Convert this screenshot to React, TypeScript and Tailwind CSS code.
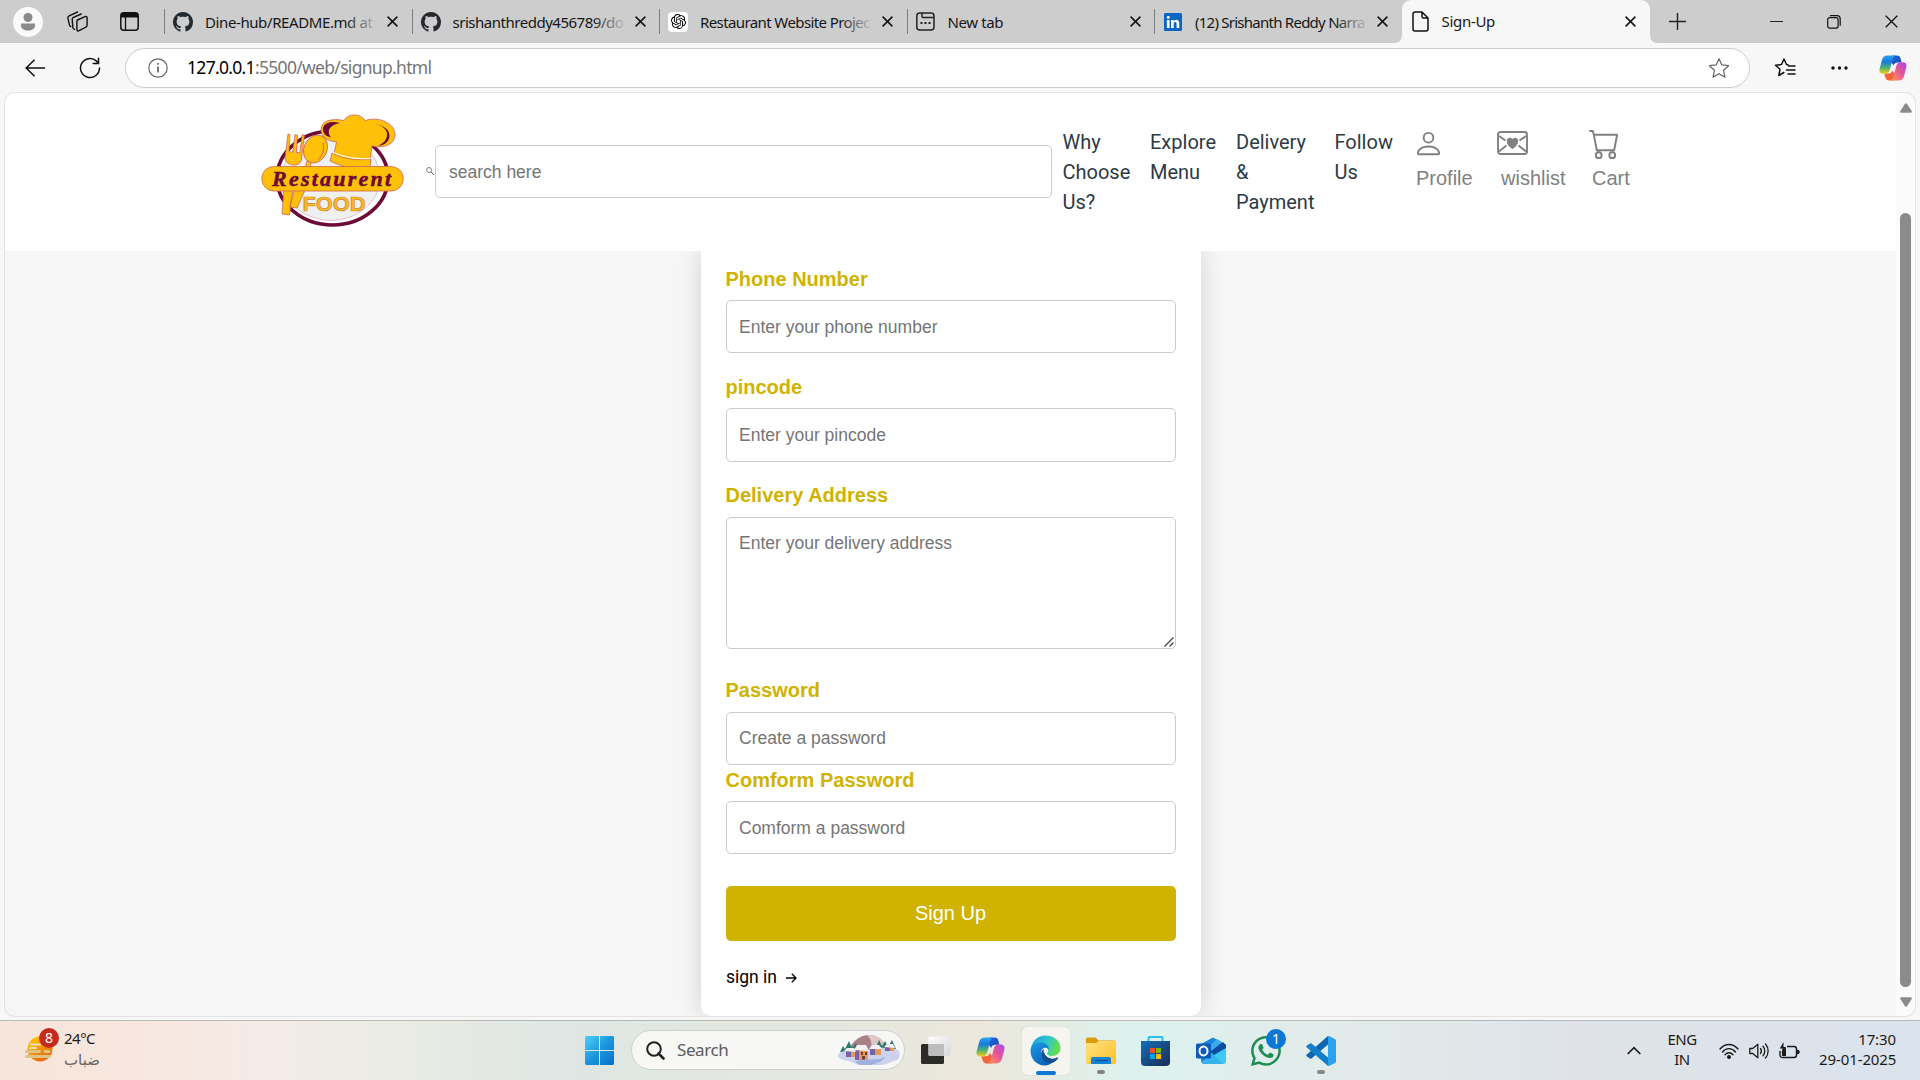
import React from "react";
import { BsPerson, BsCart, BsGithub, BsLinkedin, BsWhatsapp } from "react-icons/bs";
import { SiOpenai } from "react-icons/si";
import type { ReactNode } from "react";

const ui = "font-['Noto_Sans',sans-serif]";

function Cross({ size = 11, width = 1.5 }: { size?: number; width?: number }) {
  return (
    <svg width={size} height={size} viewBox="0 0 11 11" stroke="#111" strokeWidth={width} className="shrink-0">
      <path d="M.6.6l9.8 9.8M10.4.6L.6 10.4" />
    </svg>
  );
}

function Tab({ icon, title, track, fade }: { icon: ReactNode; title: string; track: string; fade?: boolean }) {
  return (
    <div className="flex h-[43px] w-[247.5px] shrink-0 items-center">
      <div className="h-[25px] w-px bg-[#7d7d7d]" />
      <div className="ml-2 flex h-5 w-5 items-center justify-center">{icon}</div>
      <div className="relative mb-[2px] ml-3 h-[22px] w-[174px]">
        <span className={"inline-block whitespace-nowrap text-[15px] leading-[22px] text-[#161616] " + track}>{title}</span>
        {fade && <div className="absolute inset-y-0 right-0 w-[34px] bg-gradient-to-r from-[#cdcdcd]/0 to-[#cdcdcd]" />}
      </div>
      <div className="ml-2 flex"><Cross /></div>
    </div>
  );
}

function CopilotIcon({ size, id }: { size: number; id: string }) {
  return (
    <svg width={size} height={size} viewBox="0 0 28 28">
      <defs>
        <linearGradient id={id + "a"} x1="0" y1="0" x2="0" y2="1">
          <stop offset="0" stopColor="#2ba6ee" />
          <stop offset=".35" stopColor="#1979dd" />
          <stop offset=".65" stopColor="#45b177" />
          <stop offset="1" stopColor="#f3ce14" />
        </linearGradient>
        <linearGradient id={id + "b"} x1="1" y1="0" x2="0" y2="1">
          <stop offset="0" stopColor="#a24cf0" />
          <stop offset=".45" stopColor="#e7549c" />
          <stop offset="1" stopColor="#ff9a4a" />
        </linearGradient>
        <linearGradient id={id + "c"} x1="0" y1="0" x2="1" y2="1">
          <stop offset="0" stopColor="#1c6fe0" />
          <stop offset="1" stopColor="#1c40b8" />
        </linearGradient>
      </defs>
      <path d="M13 1.500h5c2 0 3 1 3.600 3l1 4h-4c-2 0-3.500 1-4 3L12 8z" fill={"url(#" + id + "c)"} />
      <path d="M15 26.500h-5c-2 0-3-1-3.600-3l-1.200-4h4.200c2 0 3.500-1 4-3l3 4z" fill="#f2663c" />
      <path d="M8.500 1.500H17c-1.700 0-2.500 1-3.100 3L10.700 16c-.6 2-1.700 3.700-4 3.700H4c-3 0-4-2.200-3.300-5.200l2.300-8.500C3.800 3 5.500 1.500 8.500 1.500z" fill={"url(#" + id + "a)"} />
      <path d="M19.500 26.500H11c1.700 0 2.500-1 3.100-3L17.300 12c.6-2 1.700-3.700 4-3.700H24c3 0 4 2.200 3.300 5.200L25 22c-.8 3-2.500 4.500-5.500 4.500z" fill={"url(#" + id + "b)"} />
    </svg>
  );
}

function TabStrip() {
  return (
    <div className="flex h-[43px] shrink-0 bg-[#cdcdcd]">
      <div className="flex w-[164px] shrink-0 items-center">
        <div className="ml-[13px] flex h-[30px] w-[30px] items-center justify-center rounded-full bg-[#fafafa]">
          <svg width="16" height="18" viewBox="0 0 16 18" fill="#8a8a8a">
            <circle cx="8" cy="4.500" r="4.500" />
            <path d="M1 10.500h14v2c0 3-3 5-7 5s-7-2-7-5z" />
          </svg>
        </div>
        <svg className="ml-6" width="21" height="21" viewBox="0 0 21 21" fill="none" stroke="#111" strokeWidth="1.400" strokeLinejoin="round" strokeLinecap="round">
          <path d="M10.500 9l7.500-3.300c1.200-.5 2.100 0 2.100 1.200v7.400c0 .9-.4 1.500-1.200 1.900l-6.800 3.500c-1.200.6-2.200 0-2.200-1.200v-7.800c0-.9 0-1.400.6-1.700z" />
          <path d="M7.500 18.300c-1-.3-1.600-1-1.700-2L5.200 8.500c-.1-1 .4-1.800 1.300-2.200L14.200 3M3.800 15.500c-.8-.3-1.200-.8-1.400-1.700L1 7.300C.7 6.200 1.200 5.300 2.200 4.800L10.500 1" />
        </svg>
        <svg className="ml-[32px]" width="19" height="19" viewBox="0 0 19 19">
          <rect x=".8" y=".8" width="17.400" height="17.400" rx="3" fill="none" stroke="#111" strokeWidth="1.500" />
          <path d="M1 5.500V4c0-2 1-3 3-3h11c2 0 3 1 3 3v1.500z" fill="#111" />
          <path d="M5.500 5v13" stroke="#111" strokeWidth="1.300" />
        </svg>
      </div>
      <Tab icon={<BsGithub size={20} color="#24292f" />} title="Dine-hub/README.md at" track="tracking-[-0.4px]" fade />
      <Tab icon={<BsGithub size={20} color="#24292f" />} title="srishanthreddy456789/do" track="tracking-[-0.48px]" fade />
      <Tab
        icon={<div className="flex h-5 w-5 items-center justify-center rounded bg-white"><SiOpenai size={15} /></div>}
        title="Restaurant Website Projec" track="tracking-[-0.6px]" fade
      />
      <Tab
        icon={
          <svg width="19" height="19" viewBox="0 0 19 19" fill="none" stroke="#222" strokeWidth="1.500">
            <rect x=".8" y="1" width="17.200" height="17" rx="3" />
            <path d="M6 1v3.500c0 .7.400 1 1 1h11" />
            <path d="M4.500 11h2M8.500 11h2M12.500 11h2" strokeWidth="2" />
          </svg>
        }
        title="New tab" track="tracking-[-0.4px]"
      />
      <Tab icon={<BsLinkedin size={18} color="#0a66c2" className="bg-white" />} title="(12) Srishanth Reddy Narra" track="tracking-[-0.75px]" fade />
      <div className="relative flex h-[43px] w-[248px] shrink-0 items-center rounded-t-[9px] bg-[#f7f7f7]">
        <svg className="absolute -left-2 bottom-0" width="8" height="8" viewBox="0 0 8 8" fill="#f7f7f7"><path d="M8 0v8H0q8 0 8-8z" /></svg>
        <svg className="absolute -right-2 bottom-0" width="8" height="8" viewBox="0 0 8 8" fill="#f7f7f7"><path d="M0 0v8h8q-8 0-8-8z" /></svg>
        <svg className="ml-[10px]" width="17" height="21" viewBox="0 0 17 21" fill="none" stroke="#111" strokeWidth="1.500" strokeLinejoin="round">
          <path d="M3 1h7l6 6v11c0 1.300-.7 2-2 2H3c-1.300 0-2-.7-2-2V3c0-1.300.7-2 2-2zM10 1v4.500c0 1 .5 1.500 1.500 1.500H16" />
        </svg>
        <span className="mb-[2px] ml-[13px] w-[183px] text-[15px] leading-[22px] tracking-[-0.3px] text-[#161616]">Sign-Up</span>
        <Cross />
      </div>
      <div className="flex grow items-center">
        <svg className="ml-[19px]" width="17" height="17" viewBox="0 0 17 17" stroke="#222" strokeWidth="1.400"><path d="M8.500 0v17M0 8.500h17" /></svg>
        <div className="ml-[84px] h-[1.500px] w-[13px] bg-[#222]" />
        <svg className="ml-[44px]" width="14" height="14" viewBox="0 0 14 14" fill="none" stroke="#111" strokeWidth="1.200">
          <rect x=".7" y="2.700" width="10.400" height="10.400" rx="2" />
          <path d="M3 .7h7c2 0 3.200 1.200 3.200 3.200v6.800" />
        </svg>
        <div className="ml-[44px] flex"><Cross size={13} width={1.1} /></div>
      </div>
    </div>
  );
}

const star = "M10 1.500l2.600 5.700 6.100.7-4.500 4.200 1.200 6.200-5.400-3.100-5.400 3.100 1.200-6.200L1.300 7.900l6.100-.7z";

function Toolbar() {
  return (
    <div className="flex h-[50px] shrink-0 items-start bg-[#f7f7f7] pt-[5px]">
      <div className="flex h-10 w-[125px] shrink-0 items-center">
        <svg className="ml-[25px]" width="20" height="18" viewBox="0 0 20 18" fill="none" stroke="#111" strokeWidth="1.500"><path d="M20 9H1.500M9.500.7L1.200 9l8.300 8.300" /></svg>
        <svg className="ml-[34px]" width="22" height="22" viewBox="0 0 22 22" fill="none" stroke="#111" strokeWidth="1.500" strokeLinecap="round">
          <path d="M20.500 11a9.500 9.500 0 1 1-3-6.900l1.800 2.200M19.500 1.200v5.300h-5.300" />
        </svg>
      </div>
      <div className="flex h-10 w-[1625px] shrink-0 items-center rounded-full border border-[#cccccc] bg-white">
        <svg className="ml-[22px]" width="20" height="20" viewBox="0 0 20 20" fill="none" stroke="#666">
          <circle cx="10" cy="10" r="9.200" strokeWidth="1.200" />
          <path d="M10 8.500v6" strokeWidth="1.700" /><circle cx="10" cy="5.900" r=".6" fill="#666" />
        </svg>
        <span className="mb-[2px] ml-[19px] whitespace-nowrap text-[17.500px] leading-6 tracking-[-0.69px] text-[#757575]">
          <span className="text-black">127.0.0.1</span>:5500/web/signup.html
        </span>
        <svg className="ml-auto mr-[19px]" width="22" height="22" viewBox="0 0 20 20" fill="none" stroke="#666" strokeWidth="1.100" strokeLinejoin="round"><path d={star} /></svg>
      </div>
      <div className="flex h-10 grow items-center">
        <svg className="ml-[24px]" width="22" height="22" viewBox="0 0 22 22" fill="none" stroke="#111" strokeWidth="1.500" strokeLinejoin="round" strokeLinecap="round">
          <path d="M14 7.800l-1.500-.3L10 2 7.500 7.500l-6 .7L6 12.300l-1.200 6.200 5-3M14.500 9H21M12.500 13H21M14 17h7" />
        </svg>
        <svg className="ml-[35px]" width="17" height="4" viewBox="0 0 17 4" fill="#111"><circle cx="2" cy="2" r="1.700" /><circle cx="8.500" cy="2" r="1.700" /><circle cx="15" cy="2" r="1.700" /></svg>
        <div className="ml-[31px]"><CopilotIcon size={28} id="ct" /></div>
      </div>
    </div>
  );
}

function Logo() {
  return (
    <svg width="143" height="116" viewBox="0 0 143 116">
      <ellipse cx="71.500" cy="66" rx="55.500" ry="47" fill="#fff" stroke="#6d0a37" strokeWidth="3.600" />
      <ellipse cx="70" cy="66" rx="49" ry="42.500" fill="#eff0f0" stroke="#dba8bf" strokeWidth=".7" />
      <g fill="#ffc107" stroke="#c2566b" strokeWidth=".7" strokeLinejoin="round">
        <path d="M72 47l4-15c-10 0-16-5-16-12C60 10 70 6 84 10 88 1 100 1 106 9c14-5 28 2 28 13 0 10-10 14-22 12l-3 15c-13 3-26 2-37-2z" fill="none" stroke="none" />
        <path d="M72 46l3.500-16C65 29 60 24 60 17.500 60 8.500 71 6 83 8.500 87 1 100 1 104 8.500 118 4 134 11 134 23c0 9-11 14-23 11l-2 15c-13 3-25 2-37-3z" />
        <path d="M71 41c12 6 26 8 39 6l-1 9c-14 2-28-1-40-7z" />
        <path d="M27 22l2 .5-1 17 3.600.7L34 22.500l2.500.5-1 17.500 3.500.2 2-18 2.500.3L40.500 47c-.6 4-3 6-7.500 6s-9-3-9-7z" />
        <ellipse cx="54.500" cy="37" rx="11.500" ry="14.500" transform="rotate(25 54.500 37)" />
        <path d="M46 49l4 1.500-1 6h-5zM23 76h9l-3.500 27-7.500-1zM34 76h11l-9 20-7.500-1z" />
      </g>
      <path d="M79 11c-11-3-18 1-17 7.500.8 4 4 6 8 7-5-6-2-12.500 9-14.500zM113 12c14 1 19 15 4 22 15-1 17-20-4-22z" fill="#6d0a37" />
      <path d="M72 40.500c12 5 25 7 38 6" fill="none" stroke="#fff" strokeWidth="1.200" />
      <path d="M62 31c2 6-1 13-5 17" fill="none" stroke="#c2566b" strokeWidth=".8" />
      <rect x=".8" y="54.500" width="141.400" height="24.500" rx="12" fill="#ffc107" stroke="#d9704e" strokeWidth=".9" />
      <text x="11" y="73.500" textLength="119" lengthAdjust="spacing" fontSize="22" fontWeight="700" fontStyle="italic" fontFamily="Liberation Serif, serif" fill="#6d0a37" stroke="#6d0a37" strokeWidth=".5">Restaurent</text>
      <text x="41.500" y="98.500" textLength="63" lengthAdjust="spacingAndGlyphs" fontSize="20.500" fontWeight="700" fontFamily="Liberation Sans, sans-serif" fill="#fdb913" stroke="#c98a4a" strokeWidth=".7">FOOD</text>
    </svg>
  );
}

function EnvelopeHeart() {
  return (
    <svg width="31" height="24" viewBox="0 0 31 24" fill="none" stroke="#808080" strokeWidth="1.900">
      <rect x="1" y="1" width="29" height="22" rx="2.500" />
      <path d="M2 5l6.500 4.500M29 5l-6.500 4.500M2 20.500l7.500-6M29 20.500l-7.500-6" />
      <path d="M15.500 18C5 11 11.500 3.800 15.500 8c4-4.200 10.500 3 0 10z" fill="#808080" stroke="none" />
    </svg>
  );
}

function Header() {
  return (
    <div className="flex h-[158px] shrink-0 bg-white font-['Roboto',sans-serif] text-[20px] leading-[30px] text-[#2c3a44]">
      <div className="ml-[256px] mt-[19px] w-[143px] shrink-0"><Logo /></div>
      <svg className="ml-[22px] mt-[74px] shrink-0" width="8" height="8" viewBox="0 0 8 8" fill="none" stroke="#666" strokeWidth=".8"><circle cx="3" cy="3" r="2.500" /><path d="M5 5l3 3" stroke="#333" /></svg>
      <div className="ml-px mt-[52px] flex h-[53px] w-[617px] shrink-0 items-center rounded-[5px] border border-[#ccc] pl-[13px] font-['Liberation_Sans',sans-serif] text-[17.500px] text-[#757575]">
        search here
      </div>
      <div className="ml-[10.500px] mt-[34px] w-[87.500px] shrink-0">Why<br />Choose<br />Us?</div>
      <div className="mt-[34px] w-[86px] shrink-0">Explore<br />Menu</div>
      <div className="mt-[34px] w-[98.500px] shrink-0">Delivery<br />&amp;<br />Payment</div>
      <div className="mt-[34px] w-[77.500px] shrink-0">Follow<br />Us</div>
      <div className="mt-[35px] flex font-['Liberation_Sans',sans-serif] text-[#808080]">
        <div className="w-[85px]"><BsPerson size={31} className="ml-[1px]" /><div className="ml-[4px] mt-[4px]">Profile</div></div>
        <div className="w-[91px]"><div className="flex h-[31px] items-center pb-px"><EnvelopeHeart /></div><div className="ml-1 mt-[4px]">wishlist</div></div>
        <div><BsCart size={31} className="ml-px" /><div className="ml-1 mt-[4px]">Cart</div></div>
      </div>
    </div>
  );
}

function Label({ children }: { children: ReactNode }) {
  return <div className="-ml-[0.500px] h-[30px] text-[20px] font-bold leading-[30px] text-[#cfb300]">{children}</div>;
}

function SignupCard() {
  const box = "flex items-center rounded-[5px] border border-[#ccc] pl-3 text-[17.500px] text-[#757575] ";
  return (
    <div className="ml-[696px] h-[765px] w-[500px] rounded-b-[10px] bg-white px-[25px] pt-[13px] font-['Liberation_Sans',sans-serif] shadow-[0_0_25px_rgba(0,0,0,0.15)]">
      <Label>Phone Number</Label>
      <div className={box + "mt-[6px] h-[53px] pt-px"}>Enter your phone number</div>
      <div className="mt-[19px]"><Label>pincode</Label></div>
      <div className={box + "mt-[6px] h-[54px]"}>Enter your pincode</div>
      <div className="mt-[18px]"><Label>Delivery Address</Label></div>
      <div className="relative mt-[7px] h-[132px] rounded-[5px] border border-[#ccc] px-3 pt-3 text-[17.500px] leading-[26px] text-[#757575]">
        Enter your delivery address
        <svg className="absolute bottom-px right-[1px]" width="10" height="10" viewBox="0 0 10 10" stroke="#444" strokeWidth="1.300"><path d="M.5 9.500l9-9M5.500 9.500l4-4" /></svg>
      </div>
      <div className="mt-[26px]"><Label>Password</Label></div>
      <div className={box + "mt-[7px] h-[53px]"}>Create a password</div>
      <Label>Comform Password</Label>
      <div className={box + "mt-[6px] h-[53px] pt-px"}>Comform a password</div>
      <div className="mt-[32px] flex h-[55px] items-center justify-center rounded-[5px] bg-[#cfb300] pb-[2px] pr-px text-[20px] text-white">Sign Up</div>
      <div className="mt-[22px] flex items-center font-['Roboto',sans-serif] text-[17.500px] leading-[28px] text-black">
        sign in
        <svg className="ml-[9px] mt-[2px]" width="11" height="10" viewBox="0 0 11 10" fill="none" stroke="#000" strokeWidth="1.300"><path d="M0 5h10M5.800.8L10 5 5.800 9.200" /></svg>
      </div>
    </div>
  );
}

function Scrollbar() {
  return (
    <div className="flex w-[19px] shrink-0 flex-col items-center bg-[#fbfbfb]">
      <svg className="mt-[10px]" width="12" height="10" viewBox="0 0 12 10" fill="#8b8b8b"><path d="M5 .8q1-1.300 2 0l4.700 7.200q.5 1.600-1 1.800H1.300q-1.500-.2-1-1.800z" /></svg>
      <div className="mt-[100px] h-[774px] w-[11px] rounded-full bg-[#8b8b8b]" />
      <svg className="mt-[10px]" width="12" height="10" viewBox="0 0 12 10" fill="#8b8b8b"><path d="M5 9.200q1 1.300 2 0l4.700-7.200q.5-1.600-1-1.800H1.300Q-.2.4.3 2z" /></svg>
    </div>
  );
}

function Slot({ children, mark }: { children: ReactNode; mark?: boolean }) {
  return (
    <div className="relative flex h-full w-[55px] shrink-0 items-center justify-center">
      {children}
      {mark && <div className="absolute bottom-[6px] left-1/2 h-1 w-2 -translate-x-1/2 rounded-full bg-[#868686]" />}
    </div>
  );
}

function Taskbar() {
  return (
    <div className="flex h-[60px] shrink-0 border-t border-[#b9bab8] bg-[linear-gradient(90deg,#f7e5db_0%,#f8e7de_7%,#f4ebe7_14%,#ebece5_20%,#dfe6e3_29%,#e4e8e1_42%,#ece7db_51%,#dcf2ee_59%,#e2ecea_68%,#dfe3e8_82%,#dbe3ed_100%)]">
      <div className="flex w-[572px] shrink-0">
        <div className="relative ml-[25px] mt-[15px] h-[26px] w-7">
          <svg width="28" height="26" viewBox="0 0 28 26">
            <defs><linearGradient id="sun" x1="0" y1="0" x2=".6" y2="1"><stop offset="0" stopColor="#ffd400" /><stop offset="1" stopColor="#ea6512" /></linearGradient></defs>
            <circle cx="15" cy="13" r="12.500" fill="url(#sun)" />
            <path d="M6 8.500h9M5 12h6" stroke="#f9e3b0" strokeWidth="2" strokeLinecap="round" />
            <path d="M1.500 15.500h13M20 15.500h4M1.500 20.500h23" stroke="#dcc489" strokeWidth="3" strokeLinecap="round" />
          </svg>
          <div className="absolute -top-[8px] left-[14px] flex h-5 w-5 items-center justify-center rounded-full bg-[#c42b1c] text-[14px] leading-none text-white">8</div>
        </div>
        <div className="ml-[11px] mt-[7px] flex flex-col">
          <span className="text-[15px] leading-[21px] tracking-[-0.5px] text-[#1b1b1b]">24°C</span>
          <span className="mt-px font-['DejaVu_Sans',sans-serif] text-[15px] leading-[20px] text-[#6b6561]" dir="rtl">ضباب</span>
        </div>
      </div>
      <Slot>
        <svg width="29" height="29" viewBox="0 0 29 29">
          <defs><linearGradient id="win" x1="0" y1="0" x2="1" y2="1"><stop offset="0" stopColor="#4fd0fb" /><stop offset=".5" stopColor="#1c96dd" /><stop offset="1" stopColor="#0770cd" /></linearGradient></defs>
          <path d="M1 0h13v14H0V1zM15 0h13l1 1v13H15zM0 15h14v14H1l-1-1zM15 15h14v13l-1 1H15z" fill="url(#win)" />
        </svg>
      </Slot>
      <div className="ml-1 mr-[3px] mt-[9px] flex h-10 w-[274px] shrink-0 items-center rounded-full border border-[#cdd0cc] bg-[#f7f8f6]">
        <svg className="ml-[14px]" width="19" height="19" viewBox="0 0 19 19" fill="none" stroke="#222" strokeWidth="2"><circle cx="8" cy="8" r="6.800" /><path d="M12.500 12.500l5 5" strokeWidth="2.600" strokeLinecap="round" /></svg>
        <span className="ml-3 text-[17px] leading-6 tracking-[-0.4px] text-[#5c5c5c]">Search</span>
        <svg className="ml-auto mr-[4px]" width="62" height="30" viewBox="0 0 62 30">
          <path d="M11 14C16 4 24 0 31 0c11 0 17 8 18 16z" fill="#a9818a" />
          <path d="M29 0c11-1 17 5 19 13-6-1-12-1-17 3 4-6 3-11-2-16z" fill="#e2c5c6" />
          <path d="M2 17l3-6 2 3 4-8 3 7 4-5 2 8zM38 12l3-7 3 6 3-5 3 6 4-7 4 9z" fill="#2f7a6b" />
          <path d="M0 20c1-4 8-4 14-4l22-2c9-2 21-1 25 2 2 5 0 9-5 10-4 1-6 3-12 4H20c-3-2-6-3-10-4-5-1-10-2-10-6z" fill="#cdd3ee" />
          <path d="M8 15h9v7H8zM17 14h13v11H17zM32 13h11v7H32zM47 11h9v5h-9z" fill="#7763a8" />
          <path d="M13 16h4v6h-4zM21 15h9v10h-9zM37 14h6v6h-6zM52 12h4v4h-4z" fill="#e59a57" />
          <path d="M6 16l3-3h7l2 4zM16 15l3-5h9l3 6zM31 14l3-4h7l3 4zM46 12l3-3h6l2 4z" fill="#f3f1f6" />
          <path d="M23 17h2v3h-2zM27 17h2v3h-2zM24 21h3v4h-3z" fill="#6b3f4c" />
          <path d="M17 27c8-5 20 0 30-5-3 5-8 6-14 8H22z" fill="#9fb1de" />
        </svg>
      </div>
      <Slot>
        <svg width="30" height="29" viewBox="0 0 30 29">
          <defs><linearGradient id="tv" x1="0" y1="0" x2="1" y2="1"><stop offset="0" stopColor="#fdfdfd" /><stop offset="1" stopColor="#d7d7d9" /></linearGradient></defs>
          <rect y="8" width="23" height="20" rx="1.500" fill="#2b2b2a" />
          <rect x="7.500" y=".5" width="22" height="19.500" rx="1.500" fill="url(#tv)" />
          <path d="M7.500 8H23v12H9q-1.500 0-1.500-1.500z" fill="#bdbdbd" />
        </svg>
      </Slot>
      <Slot><CopilotIcon size={29} id="cb" /></Slot>
      <Slot>
        <div className="relative flex h-12 w-12 items-center justify-center rounded-[5px] bg-[#f5f4ef] shadow-[0_0_1px_rgba(0,0,0,0.25)]">
          <svg width="31" height="31" viewBox="0 0 31 31">
            <defs>
              <linearGradient id="e1" x1="0" y1="0" x2="1" y2=".3"><stop offset="0" stopColor="#1f9be0" /><stop offset=".55" stopColor="#2fc3d0" /><stop offset="1" stopColor="#62de55" /></linearGradient>
              <linearGradient id="e2" x1="0" y1="0" x2=".6" y2="1"><stop offset="0" stopColor="#1a9be4" /><stop offset="1" stopColor="#0b62bd" /></linearGradient>
            </defs>
            <path d="M1.500 11C4 4 9 .5 15.500.5 24 .5 30.500 6 30.500 13c0 5-4 8-8.500 8-3 0-5-1-5-2.200 0-.8 1.200-1.200 1.200-3.300 0-3-3.200-6-8-6-4 0-7 2-9 5z" fill="url(#e1)" />
            <path d="M.5 15.500c0-5 5-8 10-8 5.500 0 8.500 3.500 8.500 7-5-4-8 0-8 4 0 6 5 10 12 8-2 2.500-5 4-8 4-9 0-14.500-7-14.500-15z" fill="url(#e2)" />
            <path d="M13.500 14c-4 3-3.500 12 5 14 3 .6 7-.6 9.500-4.500.5-.8 0-1.300-.8-.9-6 3-13.700-.6-13.700-8.600z" fill="#124f91" />
          </svg>
          <div className="absolute bottom-0 left-[14px] h-1 w-5 rounded-full bg-[#0d78d4]" />
        </div>
      </Slot>
      <Slot mark>
        <svg width="30" height="27" viewBox="0 0 30 27">
          <defs><linearGradient id="fo" x1="0" y1="0" x2="1" y2="1"><stop offset="0" stopColor="#ffe27a" /><stop offset="1" stopColor="#fdc02f" /></linearGradient></defs>
          <path d="M0 2q0-1.500 1.500-1.500h8l3 3H28q2 0 2 2V10H0z" fill="#dd9a0a" />
          <path d="M0 6h10l3-2h16q1 0 1 1v20q0 2-2 2H2q-2 0-2-2z" fill="url(#fo)" />
          <path d="M5 27v-5q0-2 2-2h16q2 0 2 2v5z" fill="#1583d4" /><path d="M9 23.500h13" stroke="#0c57a0" strokeWidth="1.500" />
        </svg>
      </Slot>
      <Slot>
        <svg width="29" height="30" viewBox="0 0 29 30">
          <defs><linearGradient id="st" x1="0" y1="0" x2="1" y2="1"><stop offset="0" stopColor="#146fb8" /><stop offset="1" stopColor="#1d2b55" /></linearGradient></defs>
          <path d="M7.500 7V2q0-1 1-1h12q1 0 1 1v5" fill="none" stroke="#2dbdf0" strokeWidth="2" />
          <path d="M0 5h29v21q0 4-4 4H4q-4 0-4-4z" fill="url(#st)" />
          <path d="M9 12h5v5H9z" fill="#f25022" /><path d="M15 12h5v5h-5z" fill="#7fba00" /><path d="M9 18h5v5H9z" fill="#00a4ef" /><path d="M15 18h5v5h-5z" fill="#ffb900" />
        </svg>
      </Slot>
      <Slot>
        <svg width="30" height="27" viewBox="0 0 30 27">
          <path d="M5 7L17 .5 30 8v15q0 4-4 4H9q-4 0-4-4z" fill="#1a86d9" />
          <path d="M12 10l9-8 5 3-9 9z" fill="#3fa9ee" /><path d="M15 14L27 5l3 3v4L17 20z" fill="#0c4da2" />
          <path d="M30 11v12q0 4-4 4H9l-3-2z" fill="#40c9f4" /><path d="M6 25l10-9 11 11H9z" fill="#35b3ee" />
          <rect y="6.500" width="15" height="15" rx="1.500" fill="#0b5cb8" />
          <ellipse cx="7.500" cy="14" rx="4" ry="4.500" fill="none" stroke="#fff" strokeWidth="2" />
        </svg>
      </Slot>
      <Slot>
        <BsWhatsapp size={30} color="#1e8c55" />
        <div className="absolute left-[28px] top-[8px] flex h-5 w-5 items-center justify-center rounded-full bg-[#0a78d4] text-[14px] leading-none text-white">1</div>
      </Slot>
      <Slot mark>
        <svg width="30" height="30" viewBox="0 0 30 30">
          <path d="M22 0v8.500L5.500 22.500q-.8.500-1.500 0L.6 20.300q-.9-.8 0-1.600z" fill="#0c66b0" />
          <path d="M22 30v-8.500L5.500 7.500Q4.700 7 4 7.500L.6 9.700q-.9.800 0 1.600z" fill="#147fc8" />
          <path d="M22 .2Q22.500-.2 24 .4L29 3q1 .6 1 1.800v20.400q0 1.200-1 1.800l-5 2.600q-1.500.6-2 .2z" fill="#2aa3ef" />
        </svg>
      </Slot>
      <div className="ml-auto flex items-center text-[15px] leading-5 text-[#1b1b1b]">
        <svg width="14" height="9" viewBox="0 0 14 9" fill="none" stroke="#1b1b1b" strokeWidth="1.700"><path d="M.7 8L7 1.700 13.300 8" /></svg>
        <div className="mb-[4px] ml-[26px] w-[30px] whitespace-nowrap text-center tracking-[-0.5px]">ENG<br />IN</div>
        <svg className="ml-[22px]" width="20" height="16" viewBox="0 0 20 16" fill="none" stroke="#1b1b1b" strokeWidth="1.400" strokeLinecap="round">
          <path d="M1 6c5-6 13-6 18 0M3.500 9c3.800-4.500 9.200-4.500 13 0M6 11.700c2.300-2.700 5.700-2.700 8 0" /><circle cx="10" cy="14" r="1.300" fill="#1b1b1b" />
        </svg>
        <svg className="ml-[10px]" width="20" height="18" viewBox="0 0 20 18" fill="none" stroke="#1b1b1b" strokeWidth="1.300" strokeLinecap="round" strokeLinejoin="round">
          <path d="M.8 6.500v5h3l5 4.200V2.300l-5 4.200zM11.500 6.500c1.200 1.500 1.200 3.500 0 5M14 4.300c2.400 2.700 2.400 6.700 0 9.400M16.500 2c3.500 4 3.500 10 0 14" />
        </svg>
        <svg className="ml-[10px]" width="21" height="17" viewBox="0 0 21 17" fill="none" stroke="#1b1b1b" strokeWidth="1.400">
          <path d="M8 4.500h7q2.500 0 2.500 2.500v6q0 2.500-2.500 2.500H3.500Q1 15.500 1 13V9" /><path d="M18 8.500q2 0 2 1.500t-2 1.500z" fill="#1b1b1b" />
          <path d="M4.500 0L.8 6.500h2.700L2.500 11l4.500-6H4.500z" fill="#1b1b1b" stroke="none" /><path d="M3 14V9.500l4-4.500v9z" fill="#1b1b1b" stroke="none" />
        </svg>
        <div className="mb-[4px] ml-[19px] mr-6 w-[77px] whitespace-nowrap text-right tracking-[-0.1px]">17:30<br />29-01-2025</div>
      </div>
    </div>
  );
}

export default function App() {
  return (
    <div className={"flex h-[1080px] w-[1920px] flex-col overflow-hidden bg-[#f7f7f7] " + ui}>
      <TabStrip />
      <Toolbar />
      <div className="mx-[5px] mb-[4px] flex h-[923px] shrink-0 overflow-hidden rounded-[10px] bg-[#f6f6f6] shadow-[0_0_0_1px_#e2e2e2]">
        <div className="flex w-[1891px] shrink-0 flex-col">
          <Header />
          <div className="h-[765px] overflow-hidden"><SignupCard /></div>
        </div>
        <Scrollbar />
      </div>
      <Taskbar />
    </div>
  );
}
